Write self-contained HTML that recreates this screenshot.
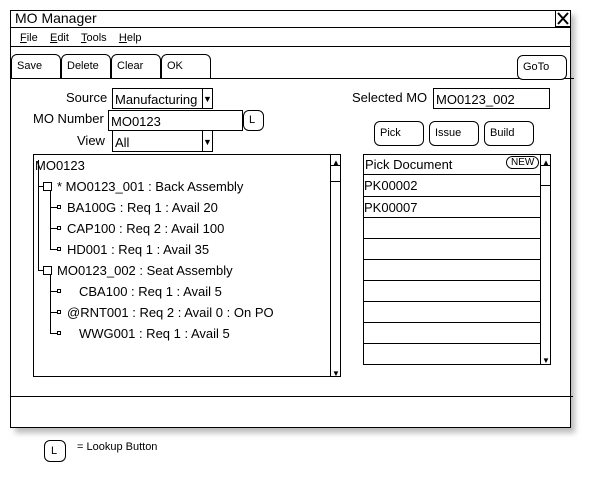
<!DOCTYPE html>
<html><head><style>
*{margin:0;padding:0;box-sizing:border-box}
body{width:613px;height:504px;background:#fff;font-family:"Liberation Sans",Arial,sans-serif;color:#000;position:relative;overflow:hidden}
.a{position:absolute}
.t{position:absolute;white-space:nowrap;font-size:13px;line-height:15px}
.b{position:absolute;border:1px solid #000;border-radius:6px;background:#fff;font-size:11px;line-height:14px;padding:0 0 0 5px}
.box{position:absolute;border:1px solid #000;background:#fff}
</style></head><body>
<div class="a" style="left:15px;top:15px;width:560px;height:418px;background:#bbb;filter:blur(3px)"></div>
<div class="box" style="left:10px;top:10px;width:561px;height:418px;border-width:1.5px"></div>
<div class="a" style="left:11px;top:27px;width:559px;height:1px;background:#000"></div>
<div class="a" style="left:11px;top:46px;width:559px;height:1px;background:#000"></div>
<div class="a" style="left:11px;top:78px;width:563px;height:1px;background:#000"></div>
<div class="a" style="left:11px;top:396px;width:562px;height:1px;background:#000"></div>
<div class="t" style="left:15px;top:11px;font-size:14px">MO Manager</div>
<div class="box" style="left:555px;top:10px;width:16px;height:17px;border-width:1.5px"></div>
<svg class="a" style="left:555px;top:10px" width="16" height="17"><path d="M3 3L13 14M13 3L3 14" stroke="#000" stroke-width="2"/></svg>
<div class="t" style="left:20px;top:31px;font-size:11px"><u>F</u>ile&nbsp;&nbsp;&nbsp; <u>E</u>dit&nbsp;&nbsp;&nbsp; <u>T</u>ools&nbsp;&nbsp;&nbsp; <u>H</u>elp</div>
<div class="b" style="left:11px;top:54px;width:50px;height:25px;line-height:23px;border-radius:6px 6px 0 0">Save</div>
<div class="b" style="left:61px;top:54px;width:50px;height:25px;line-height:23px;border-radius:6px 6px 0 0">Delete</div>
<div class="b" style="left:111px;top:54px;width:50px;height:25px;line-height:23px;border-radius:6px 6px 0 0">Clear</div>
<div class="b" style="left:161px;top:54px;width:50px;height:25px;line-height:23px;border-radius:6px 6px 0 0">OK</div>
<div class="b" style="left:517px;top:55px;width:50px;height:25px;line-height:23px">GoTo</div>

<div class="t" style="left:66px;top:90px">Source</div>
<div class="box" style="left:112px;top:88px;width:101px;height:21px"></div>
<div class="t" style="left:115px;top:92px">Manufacturing</div>
<div class="box" style="left:202px;top:88px;width:11px;height:21px"></div><div class="t" style="left:203px;top:92px;font-size:9px">▼</div>
<div class="t" style="left:33px;top:111px">MO Number</div>
<div class="box" style="left:108px;top:110px;width:135px;height:21px"></div>
<div class="t" style="left:111px;top:114px">MO0123</div>
<div class="b" style="left:243px;top:110px;width:21px;height:21px;line-height:19px;font-size:11px">L</div>
<div class="t" style="left:77px;top:133px">View</div>
<div class="box" style="left:112px;top:130px;width:101px;height:22px"></div>
<div class="t" style="left:115px;top:135px">All</div>
<div class="box" style="left:202px;top:130px;width:11px;height:22px"></div><div class="t" style="left:203px;top:135px;font-size:9px">▼</div>

<div class="box" style="left:33px;top:154px;width:308px;height:223px"></div>
<div class="box" style="left:330px;top:154px;width:11px;height:223px"></div>
<div class="a" style="left:330px;top:165px;width:11px;height:1px;background:#000"></div>
<div class="a" style="left:330px;top:181px;width:11px;height:1px;background:#000"></div>
<div class="t" style="left:332px;top:155px;font-size:8px">▲</div>
<div class="t" style="left:332px;top:366px;font-size:8px">▼</div>
<svg class="a" style="left:0;top:0" width="613" height="504"><g stroke="#000" fill="#fff" stroke-width="1">
<path d="M38.5 160V270.5H44M38.5 186.5H43M50.5 190V249.5H57M50.5 207.5H57M50.5 228.5H57M50.5 274V333.5H57M50.5 312.5H57M50.5 291.5H57"/>
<rect x="43.5" y="182.5" width="8" height="8"/><rect x="43.5" y="266.5" width="8" height="8"/>
<rect x="57.5" y="205.5" width="3" height="3"/><rect x="57.5" y="226.5" width="3" height="3"/><rect x="57.5" y="247.5" width="3" height="3"/>
<rect x="57.5" y="289.5" width="3" height="3"/><rect x="57.5" y="310.5" width="3" height="3"/><rect x="57.5" y="331.5" width="3" height="3"/>
</g></svg>
<div class="t" style="left:35px;top:158px">MO0123</div>
<div class="t" style="left:57px;top:179px">* MO0123_001 : Back Assembly</div>
<div class="t" style="left:67px;top:200px">BA100G : Req 1 : Avail 20</div>
<div class="t" style="left:67px;top:221px">CAP100 : Req 2 : Avail 100</div>
<div class="t" style="left:67px;top:242px">HD001 : Req 1 : Avail 35</div>
<div class="t" style="left:57px;top:263px">MO0123_002 : Seat Assembly</div>
<div class="t" style="left:79px;top:284px">CBA100 : Req 1 : Avail 5</div>
<div class="t" style="left:67px;top:305px">@RNT001 : Req 2 : Avail 0 : On PO</div>
<div class="t" style="left:79px;top:326px">WWG001 : Req 1 : Avail 5</div>

<div class="t" style="left:352px;top:90px">Selected MO</div>
<div class="box" style="left:433px;top:88px;width:117px;height:21px"></div>
<div class="t" style="left:436px;top:92px">MO0123_002</div>
<div class="b" style="left:374px;top:121px;width:50px;height:25px;line-height:23px">Pick</div>
<div class="b" style="left:429px;top:121px;width:50px;height:25px;line-height:23px">Issue</div>
<div class="b" style="left:484px;top:121px;width:50px;height:25px;line-height:23px">Build</div>

<div class="box" style="left:363px;top:154px;width:188px;height:211px"></div>
<div class="box" style="left:540px;top:154px;width:11px;height:211px"></div>
<div class="a" style="left:540px;top:165px;width:11px;height:1px;background:#000"></div>
<div class="a" style="left:540px;top:185px;width:11px;height:1px;background:#000"></div>
<div class="t" style="left:542px;top:155px;font-size:8px">▲</div>
<div class="t" style="left:542px;top:353px;font-size:8px">▼</div>
<div class="a" style="left:363px;top:174px;width:178px;height:1px;background:#000"></div>
<div class="a" style="left:363px;top:196px;width:178px;height:1px;background:#000"></div>
<div class="a" style="left:363px;top:217px;width:178px;height:1px;background:#000"></div>
<div class="a" style="left:363px;top:238px;width:178px;height:1px;background:#000"></div>
<div class="a" style="left:363px;top:259px;width:178px;height:1px;background:#000"></div>
<div class="a" style="left:363px;top:280px;width:178px;height:1px;background:#000"></div>
<div class="a" style="left:363px;top:301px;width:178px;height:1px;background:#000"></div>
<div class="a" style="left:363px;top:322px;width:178px;height:1px;background:#000"></div>
<div class="a" style="left:363px;top:343px;width:178px;height:1px;background:#000"></div>
<div class="t" style="left:365px;top:157px">Pick Document</div>
<div class="b" style="left:506px;top:156px;width:33px;height:13px;line-height:11px;border-radius:7px;padding-left:4px;font-size:10px">NEW</div>
<div class="t" style="left:364px;top:178px">PK00002</div>
<div class="t" style="left:364px;top:200px">PK00007</div>

<div class="b" style="left:44px;top:440px;width:22px;height:22px;line-height:20px;font-size:11px;padding-left:6px">L</div>
<div class="t" style="left:77px;top:440px;font-size:11px">= Lookup Button</div>
</body></html>
